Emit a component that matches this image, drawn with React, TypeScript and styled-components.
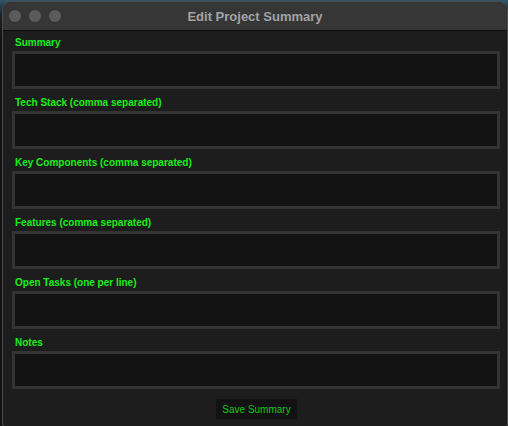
import React from "react";
import styled, { createGlobalStyle } from "styled-components";

const Global = createGlobalStyle`
  html, body { margin: 0; padding: 0; }
  body {
    width: 508px;
    height: 426px;
    overflow: hidden;
    background: linear-gradient(180deg, #34566a 0px, #1a2328 14px, #121314 40px);
    font-family: "Liberation Sans", Arial, sans-serif;
  }
`;

const Window = styled.div`
  margin: 1px 0 0 2px;
  width: 506px;
  height: 432px;
  box-sizing: border-box;
  border: 1px solid #4c4c4c;
  border-radius: 10px;
  overflow: hidden;
  background: #1d1d1d;
  display: flex;
  flex-direction: column;
`;

const TitleBar = styled.div`
  height: 28px;
  flex: none;
  background: #363636;
  border-bottom: 1px solid #0c0c0c;
  display: flex;
  align-items: center;
  position: relative;
  padding-left: 6px;
`;

const Lights = styled.div`
  display: flex;
  gap: 8px;
`;

const Light = styled.span`
  width: 12px;
  height: 12px;
  border-radius: 50%;
  background: #5b5b5b;
`;

const Title = styled.div`
  position: absolute;
  left: 0;
  right: 0;
  top: 0;
  bottom: 0;
  display: flex;
  align-items: center;
  justify-content: center;
  font-weight: bold;
  font-size: 13px;
  color: #a3a3a3;
  pointer-events: none;
`;

const Form = styled.div`
  padding: 6px 6px 0 9px;
  display: flex;
  flex-direction: column;
  gap: 8px;
`;

const Field = styled.div`
  display: flex;
  flex-direction: column;
  gap: 2px;
`;

const Label = styled.label`
  font-size: 10px;
  line-height: 12px;
  font-weight: bold;
  color: #19ee19;
  padding-left: 3px;
`;

const Input = styled.textarea`
  display: block;
  width: 488px;
  height: 38px;
  box-sizing: border-box;
  border: 3px solid #333333;
  background: #121212;
  color: #19ee19;
  resize: none;
  outline: none;
  margin: 0;
  padding: 4px;
  font-family: "Liberation Sans", Arial, sans-serif;
  font-size: 10px;
`;

const Footer = styled.div`
  display: flex;
  justify-content: center;
  padding-top: 2px;
`;

const SaveButton = styled.button`
  height: 20px;
  padding: 0 6px;
  border: none;
  background: #121212;
  color: #12c812;
  font-family: "Liberation Sans", Arial, sans-serif;
  font-size: 10px;
  cursor: pointer;
`;

const fields = [
  "Summary",
  "Tech Stack (comma separated)",
  "Key Components (comma separated)",
  "Features (comma separated)",
  "Open Tasks (one per line)",
  "Notes",
];

export default function App() {
  return (
    <>
      <Global />
      <Window>
        <TitleBar>
          <Lights>
            <Light />
            <Light />
            <Light />
          </Lights>
          <Title>Edit Project Summary</Title>
        </TitleBar>
        <Form>
          {fields.map((f) => (
            <Field key={f}>
              <Label>{f}</Label>
              <Input />
            </Field>
          ))}
          <Footer>
            <SaveButton>Save Summary</SaveButton>
          </Footer>
        </Form>
      </Window>
    </>
  );
}
